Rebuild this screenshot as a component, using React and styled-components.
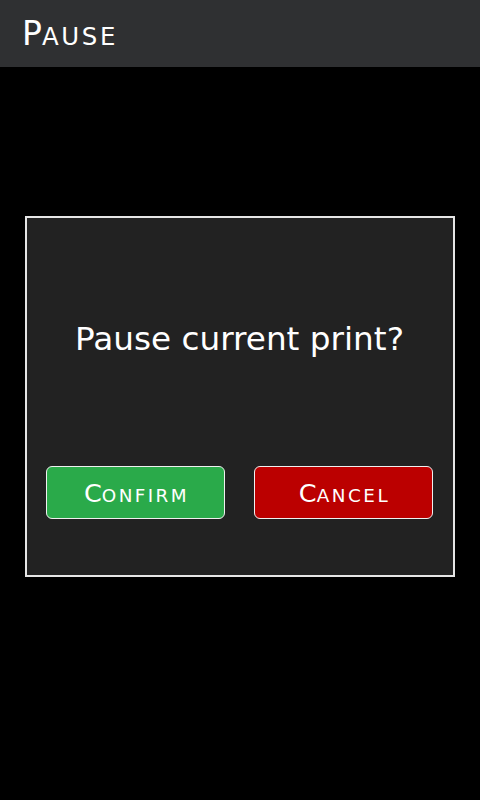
import React from 'react';
import styled, { createGlobalStyle } from 'styled-components';

const Global = createGlobalStyle`
  html, body {
    margin: 0;
    padding: 0;
    background: #000;
    font-family: "DejaVu Sans", sans-serif;
  }
`;

const Screen = styled.div`
  width: 480px;
  height: 800px;
  background: #000;
  display: flex;
  flex-direction: column;
`;

const Header = styled.div`
  height: 67px;
  background: #2f3032;
  display: flex;
  align-items: center;
  padding-left: 22px;
  box-sizing: border-box;
`;

const Title = styled.h1`
  margin: 0;
  color: #fff;
  font-size: 33px;
  font-weight: normal;
  line-height: 1;
`;

// small caps, drawn by hand: first letter full size, rest uppercase and smaller
const Rest = styled.span`
  font-size: ${p => p.$scale}em;
  text-transform: uppercase;
  letter-spacing: ${p => p.$spacing}px;
`;

const Caps = ({ text, scale = 0.74, spacing = 2.5 }) => (
  <>
    {text[0]}
    <Rest $scale={scale} $spacing={spacing}>{text.slice(1)}</Rest>
  </>
);

const Dialog = styled.div`
  margin: 149px 0 0 25px;
  width: 430px;
  height: 361px;
  box-sizing: border-box;
  border: 2px solid #e6e6e6;
  background: #222;
  display: flex;
  flex-direction: column;
  align-items: center;
  padding: 101px 20px 0 19px;
`;

const Question = styled.div`
  color: #fff;
  font-size: 32.7px;
  line-height: 40px;
  text-align: center;
`;

const Buttons = styled.div`
  margin-top: 107px;
  width: 100%;
  display: flex;
  justify-content: space-between;
`;

const Btn = styled.button`
  width: 179px;
  height: 53px;
  box-sizing: border-box;
  border: 1px solid #f0f0f0;
  border-radius: 6px;
  background: ${p => p.$bg};
  color: #fff;
  font-family: "DejaVu Sans", sans-serif;
  font-size: 25.5px;
  padding: 0 0 0 2px;
  cursor: pointer;
`;

export default function App() {
  return (
    <>
      <Global />
      <Screen>
        <Header>
          <Title><Caps text="Pause" spacing={2.7} /></Title>
        </Header>
        <Dialog>
          <Question>Pause current print?</Question>
          <Buttons>
            <Btn $bg="#2aaa4a"><Caps text="Confirm" scale={0.72} spacing={2.4} /></Btn>
            <Btn $bg="#bb0000"><Caps text="Cancel" scale={0.72} spacing={2.5} /></Btn>
          </Buttons>
        </Dialog>
      </Screen>
    </>
  );
}
